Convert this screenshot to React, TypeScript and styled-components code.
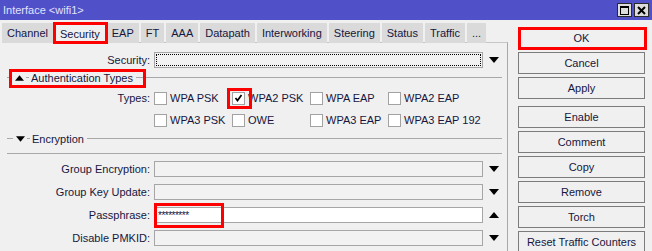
import React from 'react'
import styled, { createGlobalStyle } from 'styled-components'

const GlobalStyle = createGlobalStyle`
  html, body {
    margin: 0;
    padding: 0;
    background: #f0f0f0;
  }
  body {
    font-family: "Liberation Sans", Arial, sans-serif;
    font-size: 11px;
    color: #16163e;
  }
`

const Window = styled.div`
  width: 652px;
  height: 251px;
  overflow: hidden;
  background: #f0f0f0;
  display: flex;
  flex-direction: column;
`

const TitleBar = styled.div`
  height: 20px;
  flex: none;
  background: #5050c8;
  color: #e2e2ff;
  display: flex;
  align-items: center;
  justify-content: space-between;
  padding: 0 3px 0 3px;
  box-sizing: border-box;
`

const WinButtons = styled.div`
  display: flex;
  gap: 2px;
`

const WinButton = styled.div`
  width: 15px;
  height: 14px;
  box-sizing: border-box;
  background: #dcdcdc;
  border: 1px solid #2a2a2a;
  display: flex;
  align-items: center;
  justify-content: center;
`

const Main = styled.div`
  flex: 1;
  display: flex;
  min-height: 0;
`

const LeftCol = styled.div`
  width: 508px;
  flex: none;
  padding-top: 3px;
  display: flex;
  flex-direction: column;
  box-sizing: border-box;
`

const TabBar = styled.div`
  display: flex;
  gap: 2px;
  padding-left: 2px;
  height: 20px;
`

const Tab = styled.div<{ $active?: boolean }>`
  position: relative;
  z-index: ${p => (p.$active ? 1 : 0)};
  padding: 0 5px;
  display: flex;
  align-items: center;
  background: ${p => (p.$active ? '#f0f0f0' : '#dadada')};
  height: ${p => (p.$active ? '21px' : '20px')};
`

const Panel = styled.div`
  flex: 1;
  margin-left: 2px;
  margin-top: -1px;
  border-top: 1px solid #c6c6c6;
  border-right: 1px solid #a8a8a8;
  padding: 9px 5px 0 0;
  display: flex;
  flex-direction: column;
`

const FieldRow = styled.div`
  position: relative;
  display: flex;
  align-items: center;
  height: 16px;
`

const Label = styled.div`
  width: 148px;
  margin-right: 4px;
  text-align: right;
  white-space: nowrap;
`

const Field = styled.div<{ $white?: boolean; $focus?: boolean }>`
  position: relative;
  width: 329px;
  height: 16px;
  box-sizing: border-box;
  border: 1px solid #a6a6a6;
  background: ${p => (p.$white ? '#ffffff' : '#f2f2f2')};
  padding-left: 3px;
  display: flex;
  align-items: center;
  font-size: 10px;
  letter-spacing: -0.5px;
  outline: ${p => (p.$focus ? '1px dotted #000' : 'none')};
  outline-offset: -3px;
`

const ArrowBox = styled.div`
  margin-left: 6px;
  width: 10px;
  display: flex;
  align-items: center;
`

const SectionHeader = styled.div<{ $h: number }>`
  position: relative;
  height: ${p => p.$h}px;
  display: flex;
  align-items: center;
  padding-left: 5px;
`

const Line = styled.div<{ $w?: number }>`
  height: 1px;
  background: #a8a8a8;
  ${p => (p.$w ? `width: ${p.$w}px; flex: none;` : 'flex: 1;')}
`

const Toggle = styled.div`
  margin: 0 2px 0 3px;
  width: 9px;
  display: flex;
  align-items: center;
`

const HeaderText = styled.span`
  margin: 0 3px 0 2px;
  white-space: nowrap;
`

const CheckGrid = styled.div`
  display: grid;
  grid-template-columns: 148px repeat(4, 78px);
  grid-auto-rows: 22px;
  align-items: center;
`

const GridLabel = styled.div`
  text-align: right;
  padding-right: 4px;
  margin-right: -4px;
`

const CheckCell = styled.div`
  display: flex;
  align-items: center;
  gap: 3px;
  padding-left: 4px;
  white-space: nowrap;
`

const Box = styled.div`
  position: relative;
  flex: none;
  width: 13px;
  height: 13px;
  box-sizing: border-box;
  border: 1px solid #a2a2a2;
  background: #fff;
  display: flex;
  align-items: center;
  justify-content: center;
`

const Divider = styled.div`
  height: 1px;
  margin: 7px 0 7px 5px;
  background: #a8a8a8;
`

const Fields = styled.div`
  display: flex;
  flex-direction: column;
  gap: 7px;
`

const ButtonCol = styled.div`
  margin-left: 10px;
  width: 127px;
  padding-top: 7px;
  display: flex;
  flex-direction: column;
  gap: 3px;
`

const Button = styled.div<{ $spaced?: boolean }>`
  position: relative;
  height: 22px;
  flex: none;
  box-sizing: border-box;
  border: 1px solid #7c7c7c;
  background: #f0f0f0;
  display: flex;
  align-items: center;
  justify-content: center;
  white-space: nowrap;
  margin-top: ${p => (p.$spaced ? '4px' : '0')};
`

const Highlight = styled.div<{ $top: number; $left: number; $width: number; $height: number }>`
  position: absolute;
  top: ${p => p.$top}px;
  left: ${p => p.$left}px;
  width: ${p => p.$width}px;
  height: ${p => p.$height}px;
  box-sizing: border-box;
  border: 3px solid #ff0000;
  pointer-events: none;
  z-index: 5;
`

const Arrow = ({ up }: { up?: boolean }) => (
  <svg width="10" height="6" viewBox="0 0 10 6">
    <polygon points={up ? '0,6 10,6 5,0' : '0,0 10,0 5,6'} fill="#000" />
  </svg>
)

const Check = () => (
  <svg width="9" height="8" viewBox="0 0 9 8">
    <path d="M1.5 4 L3.5 6.5 L7.5 1" stroke="#000" strokeWidth="1.7" fill="none" />
  </svg>
)

const tabs = ['Channel', 'Security', 'EAP', 'FT', 'AAA', 'Datapath', 'Interworking', 'Steering', 'Status', 'Traffic', '...']

const types = [
  ['WPA PSK', false],
  ['WPA2 PSK', true],
  ['WPA EAP', false],
  ['WPA2 EAP', false],
  ['WPA3 PSK', false],
  ['OWE', false],
  ['WPA3 EAP', false],
  ['WPA3 EAP 192', false],
] as const

const encFields = [
  { label: 'Group Encryption:', up: false },
  { label: 'Group Key Update:', up: false },
  { label: 'Passphrase:', up: true, value: '*********' },
  { label: 'Disable PMKID:', up: false },
]

const buttons = ['OK', 'Cancel', 'Apply', 'Enable', 'Comment', 'Copy', 'Remove', 'Torch', 'Reset Traffic Counters']

export default function App() {
  return (
    <>
      <GlobalStyle />
      <Window>
        <TitleBar>
          <span>Interface &lt;wifi1&gt;</span>
          <WinButtons>
            <WinButton>
              <svg width="9" height="9" viewBox="0 0 9 9">
                <rect x="0.5" y="0.5" width="8" height="8" fill="none" stroke="#000" />
                <rect x="0" y="0" width="9" height="2" fill="#000" />
              </svg>
            </WinButton>
            <WinButton>
              <svg width="9" height="9" viewBox="0 0 9 9">
                <path d="M1 1 L8 8 M8 1 L1 8" stroke="#000" strokeWidth="2" />
              </svg>
            </WinButton>
          </WinButtons>
        </TitleBar>
        <Main>
          <LeftCol>
            <TabBar>
              {tabs.map(t => (
                <Tab key={t} $active={t === 'Security'}>
                  {t}
                  {t === 'Security' && <Highlight $top={-1} $left={-2} $width={55} $height={22} />}
                </Tab>
              ))}
            </TabBar>
            <Panel>
              <FieldRow>
                <Label>Security:</Label>
                <Field $focus />
                <ArrowBox><Arrow /></ArrowBox>
              </FieldRow>

              <SectionHeader $h={19}>
                <Line $w={5} />
                <Toggle><Arrow up /></Toggle>
                <Line $w={3} />
                <HeaderText>Authentication Types</HeaderText>
                <Line />
                <Highlight $top={1} $left={7} $width={137} $height={19} />
              </SectionHeader>

              <CheckGrid>
                <GridLabel>Types:</GridLabel>
                {types.slice(0, 4).map(([name, on]) => (
                  <CheckCell key={name}>
                    <Box>
                      {on && <Check />}
                      {on && <Highlight $top={-5} $left={-6} $width={25} $height={21} />}
                    </Box>
                    {name}
                  </CheckCell>
                ))}
                <div />
                {types.slice(4).map(([name]) => (
                  <CheckCell key={name}>
                    <Box />
                    {name}
                  </CheckCell>
                ))}
              </CheckGrid>

              <SectionHeader $h={15}>
                <Line $w={6} />
                <Toggle><Arrow /></Toggle>
                <Line $w={3} />
                <HeaderText>Encryption</HeaderText>
                <Line />
              </SectionHeader>

              <Divider />

              <Fields>
                {encFields.map(f => (
                  <FieldRow key={f.label}>
                    <Label>{f.label}</Label>
                    <Field $white={!!f.value}>
                      {f.value}
                      {f.value && <Highlight $top={-5} $left={-1} $width={70} $height={25} />}
                    </Field>
                    <ArrowBox><Arrow up={f.up} /></ArrowBox>
                  </FieldRow>
                ))}
              </Fields>
            </Panel>
          </LeftCol>
          <ButtonCol>
            {buttons.map(b => (
              <Button key={b} $spaced={b === 'Enable'}>
                {b}
                {b === 'OK' && <Highlight $top={-1} $left={-1} $width={129} $height={23} />}
              </Button>
            ))}
          </ButtonCol>
        </Main>
      </Window>
    </>
  )
}
